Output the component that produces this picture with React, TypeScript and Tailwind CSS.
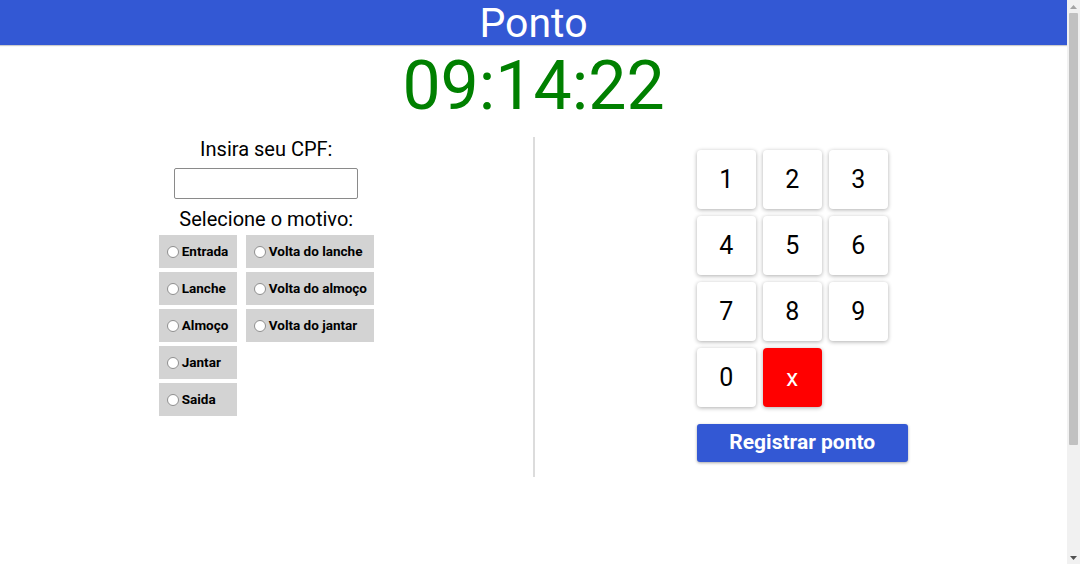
import React from "react";

const leftOpts = ["Entrada", "Lanche", "Almoço", "Jantar", "Saida"];
const rightOpts = ["Volta do lanche", "Volta do almoço", "Volta do jantar"];

function Opt({ label, w }: { label: string; w: string }) {
  return (
    <label className={`flex h-[33px] items-center bg-[#d3d3d3] pl-[8px] text-[13.5px] font-bold text-black ${w}`}>
      <span className="mr-[3px] inline-block h-[12px] w-[12px] rounded-full border border-[#8f8f8f] bg-white" />
      {label}
    </label>
  );
}

function Key({ label, red }: { label: string; red?: boolean }) {
  return (
    <button
      className={`flex h-[59px] w-[59px] items-center justify-center rounded-[4px] shadow-[0_1px_4px_rgba(0,0,0,0.32)] ${
        red ? "bg-[#ff0000] text-[24px] text-white" : "bg-white text-[25px] text-black"
      }`}
    >
      {label}
    </button>
  );
}

function Scrollbar() {
  return (
    <div className="flex h-[564px] w-[13px] flex-col bg-[#f1f1f1]">
      <div className="flex h-[13px] items-center justify-center">
        <svg width="7" height="4" viewBox="0 0 7 4">
          <path d="M0 4 L3.5 0 L7 4 Z" fill="#a3a3a3" />
        </svg>
      </div>
      <div className="mx-[2px] h-[432px] rounded-[1px] bg-[#c1c1c1]" />
      <div className="flex-1" />
      <div className="flex h-[13px] items-center justify-center">
        <svg width="7" height="4" viewBox="0 0 7 4">
          <path d="M0 0 L7 0 L3.5 4 Z" fill="#505050" />
        </svg>
      </div>
    </div>
  );
}

export default function App() {
  return (
    <div className="flex h-[564px] overflow-hidden bg-white" style={{ fontFamily: "Roboto, 'Liberation Sans', sans-serif" }}>
      <div className="flex-1">
        <header className="h-[45px] bg-[#3358d4] pt-[1px] text-center text-[41px] leading-[44px] text-white shadow-[0_1px_1px_rgba(0,0,0,0.2)]">
          Ponto
        </header>
        <div className="h-[92px] text-center text-[68px] leading-[82px] text-[#008000]">09:14:22</div>
        <main className="flex">
          <section className="flex flex-1 flex-col items-center">
            <div className="h-[24px] text-[20px] leading-[24px] text-black">Insira seu CPF:</div>
            <input className="mt-[7px] h-[31px] w-[184px] rounded-[2px] border border-[#8a8a8a] bg-white" />
            <div className="mt-[8px] h-[24px] text-[20px] leading-[24px] text-black">Selecione o motivo:</div>
            <div className="mt-[4px] flex gap-[9px]">
              <div className="flex flex-col gap-[4px]">
                {leftOpts.map((o) => (
                  <Opt key={o} label={o} w="w-[78px]" />
                ))}
              </div>
              <div className="flex flex-col gap-[4px]">
                {rightOpts.map((o) => (
                  <Opt key={o} label={o} w="w-[128px]" />
                ))}
              </div>
            </div>
          </section>
          <section className="flex h-[340px] flex-1 justify-center border-l-2 border-[#dcdcdc] pt-[13px]">
            <div className="ml-[3px] w-[211px]">
              <div className="grid grid-cols-[59px_59px_59px] gap-[7px]">
                {["1", "2", "3", "4", "5", "6", "7", "8", "9", "0"].map((k) => (
                  <Key key={k} label={k} />
                ))}
                <Key label="x" red />
              </div>
              <button className="mt-[17px] h-[38px] w-[211px] rounded-[3px] bg-[#3358d4] text-[21px] font-bold text-white shadow-[0_1px_3px_rgba(0,0,0,0.35)]">
                Registrar ponto
              </button>
            </div>
          </section>
        </main>
      </div>
      <Scrollbar />
    </div>
  );
}
